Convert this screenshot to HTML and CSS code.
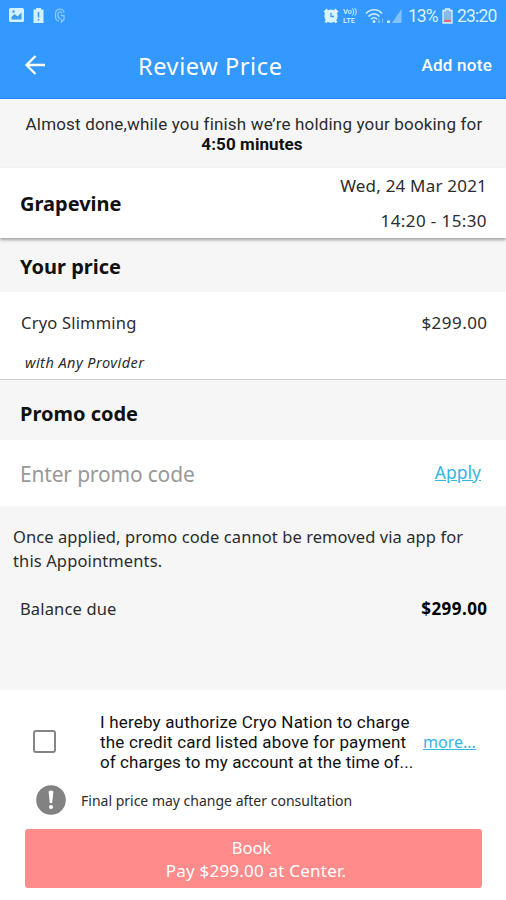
FILE: index.html
```
<!DOCTYPE html>
<html lang="en">
<head>
<meta charset="utf-8">
<title>Review Price</title>
<link rel="stylesheet" href="styles.css">
</head>
<body>
<header class="top">
  <div class="status">
    <svg width="60" height="18" viewBox="0 0 60 18">
      <rect x="0" y="1" width="15" height="14" rx="1.5" fill="#d3f1ff"/>
      <path d="M2.500 12.500V10l3-3 3 2.500 4-4v7z" fill="#3b9cf8"/><circle cx="4.500" cy="4.500" r="1.200" fill="#3b9cf8"/>
      <path d="M27 1h5v1.500h2.500V16h-10V2.500H27z" fill="#d3f1ff"/>
      <path d="M29.500 5v5.500M29.500 12v1.500" stroke="#3b9cf8" stroke-width="1.600"/>
      <g fill="none" stroke="#8bcaff" stroke-width="1.300"><path d="M55 5.500C54 1 47 .8 46.500 6.500V10c0 2 1.500 3.500 3.500 4"/><path d="M53 6.500c-1-2.500-4-2-4 .5v2c0 1.500 1 2.500 2.500 2.500M51.500 8.500H55v4l-2.500 2.500v-3"/></g>
    </svg>
    <div class="status-right">
      <svg class="alarm" width="16" height="16" viewBox="0 0 16 16"><circle cx="8" cy="8.200" r="6.600" fill="#d8f2ff"/><path d="M1.500 4.500l3-3M14.500 4.500l-3-3M2.500 14.500l2-2.500M13.500 14.500l-2-2.500" stroke="#d8f2ff" stroke-width="2.600"/><path d="M8 4.800v3.700h3" fill="none" stroke="#3b9cf8" stroke-width="1.300"/></svg>
      <div class="lte"><span class="vo">Vo))</span><span>LTE</span></div>
      <svg class="wifi" width="20" height="17" viewBox="0 0 20 17"><g fill="none" stroke="#c8ecff" stroke-width="1.600"><path d="M1 5.500c4.500-5 12-5 16 0M3.500 8.500c3.200-3.500 8-3.500 11 0M6 11.200c2-2 4.500-2 6 0"/></g><circle cx="9" cy="13.500" r="1.500" fill="#c8ecff"/><path d="M14 10.500v4M12.800 13l1.200 1.800 1.400-1.800M17.500 14.500v-3.500" fill="none" stroke="#7fc3ff"/></svg>
      <svg class="signal" width="15" height="16" viewBox="0 0 15 16"><path d="M14.500 1v14H5z" fill="#83c3ff"/><rect x="0" y="12.500" width="3" height="2.500" fill="#c8ecff"/></svg>
      <span class="pct">13%</span>
      <svg class="bat" width="11" height="16" viewBox="0 0 11 16"><path d="M3.500 1h4v1.500H10V15H1V2.500h2.500z" fill="#8ab9e8" stroke="#d8f2ff" stroke-width="1.300"/><rect x="2" y="11.800" width="7" height="2.200" fill="#e8667a"/></svg>
      <span class="clock">23:20</span>
    </div>
  </div>
  <nav class="bar">
    <svg class="back" width="22" height="22" viewBox="0 0 22 22" fill="none" stroke="#fff" stroke-width="2.300"><path d="M21 11H3M11.500 2L2.500 11l9 9"/></svg>
    <h1 class="title">Review Price</h1>
    <span class="note">Add note</span>
  </nav>
</header>
<p class="hold">Almost done,while you finish we’re holding your booking for<br><b>4:50 minutes</b></p>
<section class="place">
  <h2 class="h grapevine">Grapevine</h2>
  <div class="when"><span class="date">Wed, 24 Mar 2021</span><span class="time">14:20 - 15:30</span></div>
</section>
<section class="price-head"><h2 class="h your">Your price</h2></section>
<section class="service">
  <div class="line"><span class="cryo">Cryo Slimming</span><span class="amount">$299.00</span></div>
  <em class="provider">with Any Provider</em>
</section>
<section class="promo-head"><h2 class="h promo">Promo code</h2></section>
<section class="promo-row"><span class="enter">Enter promo code</span><a class="apply">Apply</a></section>
<section class="summary">
  <p class="once">Once applied, promo code cannot be removed via app for</p>
  <p class="once2">this Appointments.</p>
  <div class="line balance"><span class="due">Balance due</span><b class="total">$299.00</b></div>
</section>
<footer class="foot">
  <div class="auth">
    <span class="box"></span>
    <p class="terms"><span>I hereby authorize Cryo Nation to charge</span><br><span>the credit card listed above for payment</span><br><span class="t3">of charges to my account at the time of...</span></p>
    <a class="more">more...</a>
  </div>
  <div class="final">
    <svg width="30" height="30" viewBox="0 0 30 30"><circle cx="15" cy="15" r="14.800" fill="#828282"/><path d="M12.600 6.500q2.400-2 4.800 0l-1.200 11.500h-2.400z" fill="#fff"/><circle cx="15" cy="22" r="2" fill="#fff"/></svg>
    <span class="finaltext">Final price may change after consultation</span>
  </div>
  <button class="book"><span class="b1">Book</span><span class="b2">Pay $299.00 at Center.</span></button>
</footer>
</body>
</html>
```
FILE: styles.css
```
* { box-sizing: border-box; margin: 0; padding: 0; }
body { width: 506px; height: 900px; overflow: hidden; background: #fff; color: #2c2c2c; font-family: "Noto Sans", sans-serif; font-size: 16px; white-space: nowrap; }
.top { height: 99px; background: #3399ff; border-bottom: 1px solid #1f86f2; color: #fff; }
.status { height: 32px; padding: 7px 9px 0; display: flex; justify-content: space-between; }
.status-right { display: flex; align-items: center; height: 18px; font-family: Roboto, sans-serif; color: #d8f2ff; }
.lte { display: flex; flex-direction: column; font-size: 7.5px; line-height: 9px; font-weight: 500; width: 16px; margin-left: 4px; }
.vo { letter-spacing: -0.1px; }
.wifi { margin-left: 6px; }
.signal { margin-left: 2px; }
.pct { font-size: 17.5px; margin-left: 6px; width: 31px; letter-spacing: -1px; }
.bat { margin-left: 3px; }
.clock { font-size: 17.5px; margin-left: 4px; width: 40px; letter-spacing: -0.8px; }
.bar { height: 66px; display: grid; grid-template-columns: 138px 1fr auto; align-items: center; padding-right: 14px; }
.back { margin-left: 24px; }
.title { font-size: 23.5px; font-weight: 400; line-height: 32px; margin-top: 1px; letter-spacing: 0.6px; }
.note { font-family: Roboto, sans-serif; font-weight: 500; font-size: 17px; letter-spacing: 0.25px; }
.hold { height: 69px; background: #f6f6f6; font-family: Roboto, sans-serif; font-size: 17px; line-height: 20px; text-align: center; padding-top: 15px; padding-left: 2px; letter-spacing: 0.17px; }
.hold b { color: #111; margin-right: 4px; letter-spacing: 0.1px; }
.place { height: 70px; background: #fff; display: flex; justify-content: space-between; align-items: center; padding: 0 19px 0 20px; position: relative; box-shadow: 0 2px 3px rgba(0,0,0,.35); }
.h { font-size: 20px; font-weight: 700; color: #111; line-height: 28px; }
.grapevine { margin-top: 2px; }
.when { display: flex; flex-direction: column; align-items: flex-end; line-height: 35px; font-size: 17px; }
.date { letter-spacing: 0.2px; }
.time { letter-spacing: 0.4px; }
.price-head { height: 54px; background: #f6f6f6; padding: 15px 20px 0; }
.service { height: 88px; padding: 19px 19px 0 21px; border-bottom: 1px solid #ccc; }
.line { display: flex; justify-content: space-between; line-height: 24px; font-size: 16.5px; }
.cryo { letter-spacing: 0.2px; }
.amount { font-size: 17px; letter-spacing: 0.45px; margin-right: -0.5px; }
.provider { display: block; font-size: 14.5px; line-height: 20px; margin: 17px 0 0 4px; letter-spacing: 0.45px; }
.promo-head { height: 60px; background: #f6f6f6; padding: 20px 20px 0; }
.promo-row { height: 66px; display: flex; justify-content: space-between; align-items: center; padding: 2px 25px 0 20px; }
.enter { font-size: 21px; color: #999; letter-spacing: -0.18px; }
.apply { font-size: 17.5px; color: #35b5e2; text-decoration: underline; margin-top: -4px; }
.summary { height: 184px; background: #f6f6f6; padding: 19px 19px 0 13px; font-size: 16.5px; line-height: 24px; }
.once { letter-spacing: 0.08px; }
.once2 { letter-spacing: 0.12px; }
.balance { margin-top: 24px; padding-left: 7px; }
.due { letter-spacing: 0.15px; }
.total { color: #000; font-size: 17px; letter-spacing: 0.45px; margin-right: -0.5px; }
.foot { height: 210px; padding: 22px 24px 0 25px; }
.auth { display: flex; height: 60px; font-family: Roboto, sans-serif; font-size: 17px; line-height: 20px; }
.box { width: 23px; height: 23px; border: 2px solid #858585; border-radius: 3px; margin: 18px 0 0 8px; }
.terms { margin-left: 44px; width: 315px; color: #111; letter-spacing: 0.18px; }
.t3 { letter-spacing: 0.07px; }
.more { margin: 20px 0 0 8px; font-family: "Noto Sans", sans-serif; font-size: 16px; color: #35b5e2; text-decoration: underline; }
.final { display: flex; align-items: center; gap: 15px; margin: 13px 0 0 11px; height: 30px; }
.finaltext { font-size: 14px; }
.book { display: flex; flex-direction: column; align-items: center; width: 457px; height: 59px; margin-top: 14px; border: 0; border-radius: 3px; background: #ff8b8b; color: #fff; font: 17px/23px "Noto Sans", sans-serif; padding: 7px 0 0; }
.b1 { font-size: 16.5px; margin-right: 4px; }
.b2 { letter-spacing: 0.22px; margin-left: 5px; }
```
